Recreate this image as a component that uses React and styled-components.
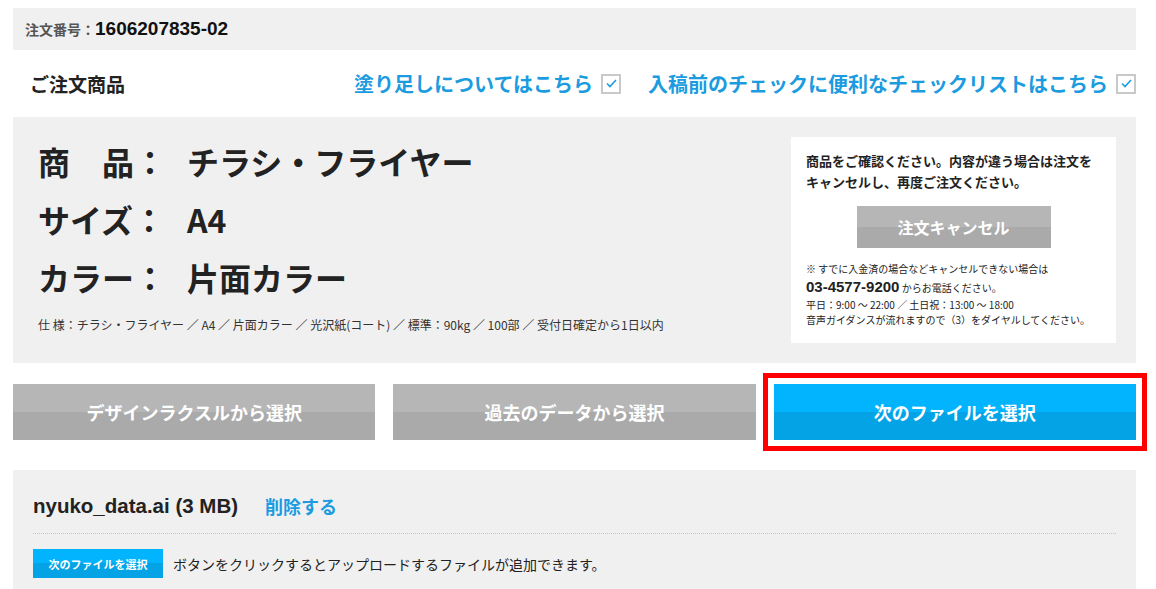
import React from 'react';
import styled, { createGlobalStyle } from 'styled-components';

const GlobalStyle = createGlobalStyle`
  body {
    margin: 0;
    background: #fff;
    color: #222;
    font-family: "Liberation Sans", "Noto Sans CJK JP", sans-serif;
  }
`;

const Page = styled.div`
  width: 1123px;
  padding: 8px 0 0 13px;
`;

const OrderBar = styled.div`
  height: 42px;
  background: #f0f0f0;
  display: flex;
  align-items: center;
  padding-left: 12px;
`;

const OrderLabel = styled.span`
  font-size: 14px;
  font-weight: bold;
  color: #555;
`;

const OrderNo = styled.span`
  font-size: 19px;
  font-weight: bold;
  color: #111;
`;

const HeadRow = styled.div`
  height: 67px;
  display: flex;
  align-items: center;
  padding-left: 17px;
`;

const Heading = styled.h2`
  margin: 0;
  font-size: 19px;
  font-weight: bold;
  color: #222;
  flex: 1;
`;

const HelpLink = styled.a`
  display: flex;
  align-items: center;
  gap: 8px;
  font-size: 20px;
  font-weight: bold;
  color: #1b9be0;
  text-decoration: none;
  margin-left: 27px;
`;

const CheckBox = styled.span`
  width: 16px;
  height: 16px;
  border: 2px solid #c9c9c9;
  background: #fff;
  display: flex;
  align-items: center;
  justify-content: center;
`;

const ProductPanel = styled.div`
  background: #f0f0f0;
  display: flex;
  justify-content: space-between;
  padding: 15px 20px 20px 25px;
  height: 211px;
`;

const ProductInfo = styled.div`
  display: flex;
  flex-direction: column;
`;

const InfoRow = styled.div`
  height: 58px;
  display: flex;
  align-items: center;
  font-family: "Noto Sans CJK JP", sans-serif;
  font-size: 32px;
  font-weight: bold;
  color: #222;
`;

const InfoLabel = styled.span`
  width: 149px;
  flex-shrink: 0;
`;

const Spec = styled.div`
  margin-top: 10px;
  font-family: "Noto Sans CJK JP", sans-serif;
  font-size: 12px;
  line-height: 18px;
  color: #333;
`;

const CancelBox = styled.div`
  margin-top: 5px;
  width: 325px;
  height: 206px;
  box-sizing: border-box;
  background: #fff;
  padding: 13px 15px 0 15px;
`;

const CancelLead = styled.p`
  margin: 0;
  font-family: "Noto Sans CJK JP", sans-serif;
  font-size: 13px;
  line-height: 21px;
  font-weight: bold;
  color: #222;
`;

const GrayButton = styled.button`
  display: block;
  border: none;
  color: #fff;
  font-family: "Noto Sans CJK JP", sans-serif;
  font-weight: bold;
  background: linear-gradient(to bottom, #b6b6b6 50%, #aaaaaa 50%);
  cursor: pointer;
`;

const CancelButton = styled(GrayButton)`
  width: 194px;
  height: 42px;
  margin: 14px auto 12px;
  font-size: 16px;
`;

const Note = styled.div`
  font-family: "Noto Sans CJK JP", sans-serif;
  font-size: 10px;
  line-height: ${p => p.$lh || 15}px;
  color: #222;
`;

const Phone = styled.span`
  font-family: "Liberation Sans", sans-serif;
  font-size: 15px;
  font-weight: bold;
`;

const ActionRow = styled.div`
  margin-top: 21px;
  display: grid;
  grid-template-columns: repeat(3, 1fr);
  column-gap: 18px;
`;

const ActionButton = styled(GrayButton)`
  height: 56px;
  font-size: 18px;
  ${p => p.$primary && `
    background: linear-gradient(to bottom, #02b3fd 50%, #03a3e6 50%);
    outline: 5px solid #ff0000;
    outline-offset: 6px;
  `}
`;

const FilePanel = styled.div`
  margin-top: 30px;
  background: #f0f0f0;
  padding: 24px 20px 20px 20px;
`;

const FileRow = styled.div`
  display: flex;
  align-items: center;
  height: 24px;
  padding-bottom: 15px;
  border-bottom: 1px dotted #c4c4c4;
`;

const FileName = styled.span`
  font-size: 20.5px;
  font-weight: bold;
  color: #222;
`;

const DeleteLink = styled.a`
  margin-left: 27px;
  font-family: "Noto Sans CJK JP", sans-serif;
  font-size: 18px;
  font-weight: bold;
  color: #1b9be0;
`;

const AddRow = styled.div`
  margin-top: 15px;
  display: flex;
  align-items: center;
  gap: 10px;
`;

const SmallButton = styled.button`
  width: 130px;
  height: 29px;
  border: none;
  color: #fff;
  font-family: "Noto Sans CJK JP", sans-serif;
  font-size: 11px;
  font-weight: bold;
  background: linear-gradient(to bottom, #02b3fd 50%, #03a3e6 50%);
`;

const AddText = styled.span`
  font-family: "Noto Sans CJK JP", sans-serif;
  font-size: 14px;
  color: #222;
`;

const Check = () => (
  <CheckBox>
    <svg width="11" height="9" viewBox="0 0 11 9">
      <path d="M1 4.5 L4 7.5 L10 1" fill="none" stroke="#1b9be0" strokeWidth="1.6" />
    </svg>
  </CheckBox>
);

const App = () => {
  const info = [
    ['商　品：', 'チラシ・フライヤー'],
    ['サイズ：', 'A4'],
    ['カラー：', '片面カラー'],
  ];
  return (
    <Page>
      <GlobalStyle />
      <OrderBar>
        <OrderLabel>注文番号：</OrderLabel>
        <OrderNo>1606207835-02</OrderNo>
      </OrderBar>

      <HeadRow>
        <Heading>ご注文商品</Heading>
        <HelpLink href="#">塗り足しについてはこちら<Check /></HelpLink>
        <HelpLink href="#">入稿前のチェックに便利なチェックリストはこちら<Check /></HelpLink>
      </HeadRow>

      <ProductPanel>
        <ProductInfo>
          {info.map(([label, value]) => (
            <InfoRow key={label}>
              <InfoLabel>{label}</InfoLabel>
              <span>{value}</span>
            </InfoRow>
          ))}
          <Spec>仕 様：チラシ・フライヤー ／ A4 ／ 片面カラー ／ 光沢紙(コート) ／ 標準：90kg ／ 100部 ／ 受付日確定から1日以内</Spec>
        </ProductInfo>
        <CancelBox>
          <CancelLead>商品をご確認ください。内容が違う場合は注文を<br />キャンセルし、再度ご注文ください。</CancelLead>
          <CancelButton>注文キャンセル</CancelButton>
          <Note $lh={18}>※ すでに入金済の場合などキャンセルできない場合は</Note>
          <Note $lh={18}><Phone>03-4577-9200</Phone> からお電話ください。</Note>
          <Note>平日：9:00 〜 22:00 ／ 土日祝：13:00 〜 18:00</Note>
          <Note>音声ガイダンスが流れますので（3）をダイヤルしてください。</Note>
        </CancelBox>
      </ProductPanel>

      <ActionRow>
        <ActionButton>デザインラクスルから選択</ActionButton>
        <ActionButton>過去のデータから選択</ActionButton>
        <ActionButton $primary>次のファイルを選択</ActionButton>
      </ActionRow>

      <FilePanel>
        <FileRow>
          <FileName>nyuko_data.ai (3 MB)</FileName>
          <DeleteLink>削除する</DeleteLink>
        </FileRow>
        <AddRow>
          <SmallButton>次のファイルを選択</SmallButton>
          <AddText>ボタンをクリックするとアップロードするファイルが追加できます。</AddText>
        </AddRow>
      </FilePanel>
    </Page>
  );
};

export default App;
